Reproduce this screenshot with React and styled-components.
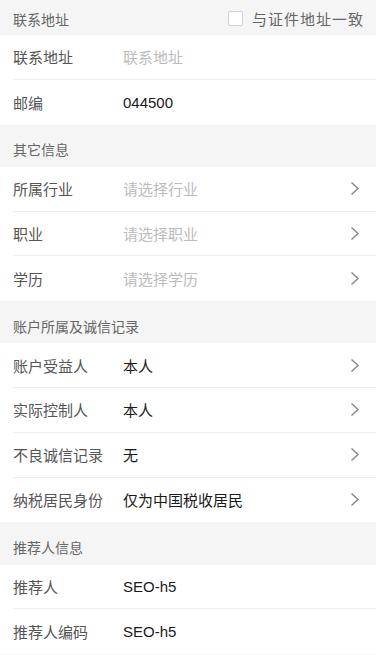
import React, { useState } from 'react';
import styled, { createGlobalStyle } from 'styled-components';

const GlobalStyle = createGlobalStyle`
  html, body {
    margin: 0;
    padding: 0;
    background: #fff;
  }
  body {
    font-family: 'Liberation Sans', 'Noto Sans CJK SC', sans-serif;
    -webkit-font-smoothing: antialiased;
  }
`;

const Page = styled.div`
  width: 376px;
  height: 655px;
  overflow: hidden;
  background: #f5f5f5;
`;

const SectionHead = styled.div`
  display: flex;
  align-items: center;
  justify-content: space-between;
  box-sizing: border-box;
  height: ${p => (p.$first ? '35px' : '42.3px')};
  padding: ${p => (p.$first ? '2px 12px 0 13px' : '7px 13px 0')};
  font-size: 14px;
  color: #666;
  background: #f5f5f5;
`;

const CheckLabel = styled.label`
  display: flex;
  align-items: center;
  gap: 9px;
  font-size: 15px;
  letter-spacing: 1px;
  color: #666;
  cursor: pointer;
`;

const Box = styled.span`
  display: inline-block;
  width: 13px;
  height: 13px;
  border: 1px solid #d2d2d2;
  border-radius: 2px;
  background: ${p => (p.$on ? '#e8383d' : '#fff')};
`;

const Group = styled.div`
  background: #fff;
`;

const Row = styled.div`
  display: flex;
  align-items: center;
  height: 44.75px;
  box-sizing: border-box;
  margin-left: 13px;
  padding-right: 16px;
  font-size: 15px;
  border-bottom: ${p => (p.$last ? 'none' : '1px solid #eeeeee')};
`;

const Label = styled.div`
  width: 110px;
  flex-shrink: 0;
  color: #555;
`;

const Value = styled.div`
  flex: 1;
  color: ${p => (p.$placeholder ? '#bbbbbb' : '#1a1a1a')};
`;

const Arrow = () => (
  <svg width="10" height="15" viewBox="0 0 10 15">
    <polyline points="1.5,1.5 8,7.5 1.5,13.5" fill="none" stroke="#8a8a8a" strokeWidth="1.5" />
  </svg>
);

const sections = [
  {
    title: '其它信息',
    rows: [
      { label: '所属行业', placeholder: '请选择行业', arrow: true },
      { label: '职业', placeholder: '请选择职业', arrow: true },
      { label: '学历', placeholder: '请选择学历', arrow: true },
    ],
  },
  {
    title: '账户所属及诚信记录',
    rows: [
      { label: '账户受益人', value: '本人', arrow: true },
      { label: '实际控制人', value: '本人', arrow: true },
      { label: '不良诚信记录', value: '无', arrow: true },
      { label: '纳税居民身份', value: '仅为中国税收居民', arrow: true },
    ],
  },
  {
    title: '推荐人信息',
    rows: [
      { label: '推荐人', value: 'SEO-h5' },
      { label: '推荐人编码', value: 'SEO-h5' },
    ],
  },
];

function FormRow({ row, last }) {
  return (
    <Row $last={last}>
      <Label>{row.label}</Label>
      <Value $placeholder={!row.value}>{row.value || row.placeholder}</Value>
      {row.arrow && <Arrow />}
    </Row>
  );
}

export default function App() {
  const [same, setSame] = useState(false);

  return (
    <Page>
      <GlobalStyle />
      <SectionHead $first>
        <span>联系地址</span>
        <CheckLabel onClick={() => setSame(!same)}>
          <Box $on={same} />
          与证件地址一致
        </CheckLabel>
      </SectionHead>
      <Group>
        <FormRow row={{ label: '联系地址', placeholder: '联系地址' }} />
        <FormRow row={{ label: '邮编', value: '044500' }} last />
      </Group>

      {sections.map(sec => (
        <React.Fragment key={sec.title}>
          <SectionHead>{sec.title}</SectionHead>
          <Group>
            {sec.rows.map((r, i) => (
              <FormRow key={r.label} row={r} last={i === sec.rows.length - 1} />
            ))}
          </Group>
        </React.Fragment>
      ))}
    </Page>
  );
}
